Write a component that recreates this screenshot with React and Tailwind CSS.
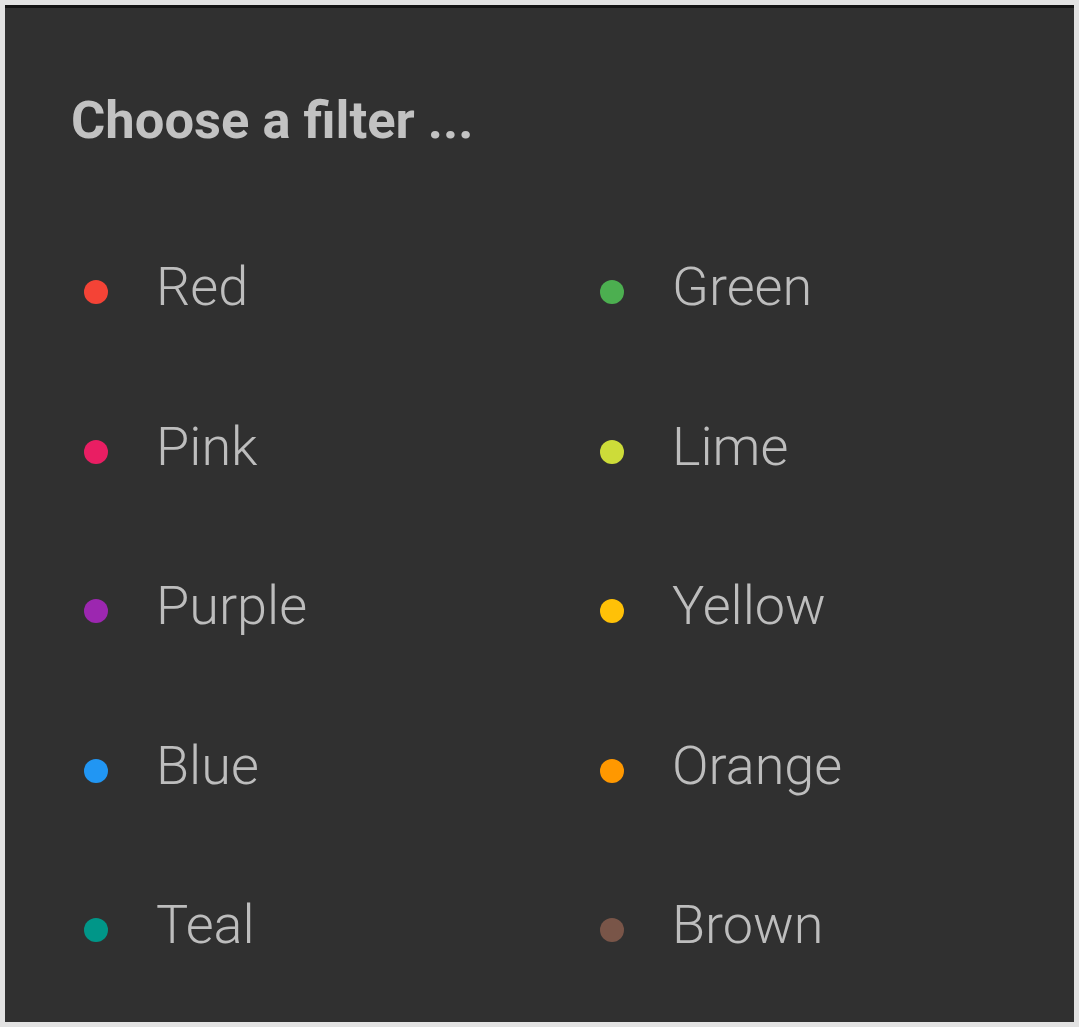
import React from "react";

const filters = [
  { name: "Red", color: "bg-[#f44336]" },
  { name: "Green", color: "bg-[#4caf50]" },
  { name: "Pink", color: "bg-[#e91e63]" },
  { name: "Lime", color: "bg-[#cddc39]" },
  { name: "Purple", color: "bg-[#9c27b0]" },
  { name: "Yellow", color: "bg-[#ffc107]" },
  { name: "Blue", color: "bg-[#2196f3]" },
  { name: "Orange", color: "bg-[#ff9800]" },
  { name: "Teal", color: "bg-[#009688]" },
  { name: "Brown", color: "bg-[#795548]" },
];

export default function App() {
  return (
    <div className="w-[1079px] h-[1027px] bg-[#e2e2e2] pt-[5px] pl-[5px] font-['Roboto',sans-serif]">
      <div className="w-[1069px] h-[1017px] bg-[#303030] border-t-[3px] border-[#141414]">
        {/* heading */}
        <h1 className="pt-[86px] pl-[66px] text-[52.5px] leading-none font-bold text-[#c2c2c2]">
          Choose a filter ...
        </h1>

        {/* list of filters */}
        <div className="mt-[61px] pl-[79px] grid grid-cols-[516px_1fr]">
          {filters.map((f) => (
            <div key={f.name} className="h-[159.5px] flex items-center">
              <span className={`w-[24px] h-[24px] rounded-full mt-[10px] shrink-0 ${f.color}`} />
              <span className="ml-[48px] text-[54px] leading-none font-light text-[#bdbdbd]">
                {f.name}
              </span>
            </div>
          ))}
        </div>
      </div>
    </div>
  );
}
